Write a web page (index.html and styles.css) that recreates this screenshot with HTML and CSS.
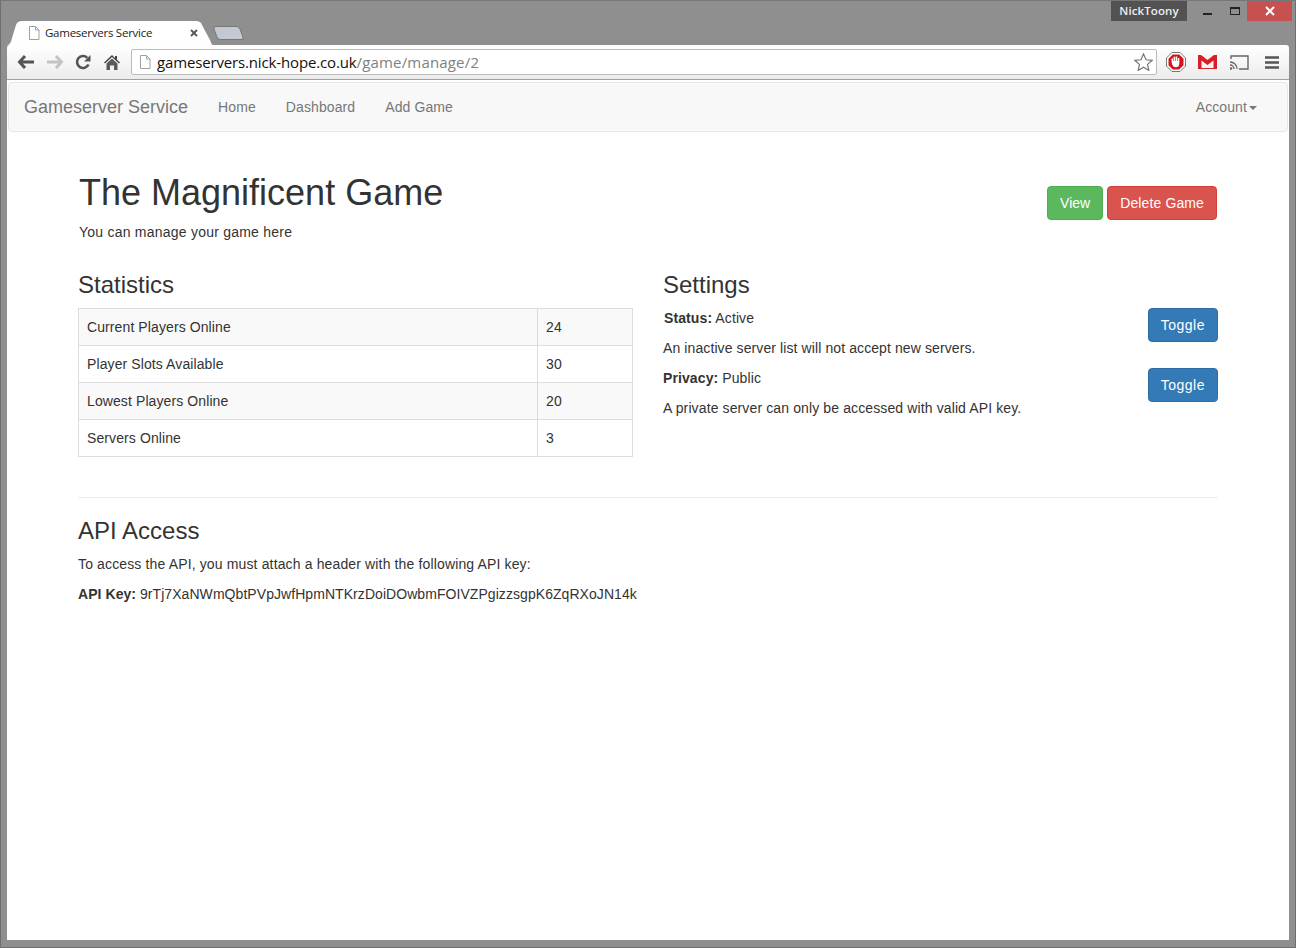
FILE: index.html
```html
<!DOCTYPE html>
<html lang="en">
<head>
    <meta charset="UTF-8">
    <title>Gameservers Service</title>
    <link rel="stylesheet" href="styles.css">
</head>
<body>

<div class="window">
    <div class="titlebar">
        <div class="tab">
            <svg class="doc-icon" width="12" height="14" viewBox="0 0 12 14"><path d="M1.5.5h6l3.500 3.500v9.500h-9.500z M7.500.5v3.500h3.500" fill="#fff" stroke="#a0a0a0"/></svg>
            <span class="tab-title">Gameservers Service</span>
            <svg class="tab-close" width="8" height="8" viewBox="0 0 8 8"><path d="M1 1l6 6M7 1l-6 6" stroke="#555" stroke-width="1.800"/></svg>
        </div>
        <div class="new-tab"></div>
        <div class="user-badge">NickToony</div>
        <div class="win-controls">
            <span class="win-btn"><i class="win-min"></i></span>
            <span class="win-btn win-btn-max"><i class="win-max"></i></span>
            <span class="win-btn win-close">
                <svg width="10" height="10" viewBox="0 0 10 10"><path d="M1 1l8 8M9 1l-8 8" stroke="#fff" stroke-width="2"/></svg>
            </span>
        </div>
    </div>

    <div class="toolbar">
        <svg class="tool" width="18" height="16" viewBox="0 0 18 16"><path d="M8 2L2.500 8 8 14M3 8h14" fill="none" stroke="#555" stroke-width="3"/></svg>
        <svg class="tool" width="18" height="16" viewBox="0 0 18 16"><path d="M10 2l5.500 6L10 14M15 8H1" fill="none" stroke="#c4c4c4" stroke-width="3"/></svg>
        <svg class="tool" width="16" height="16" viewBox="0 0 16 16"><path d="M13.500 10.500A6 6 0 1 1 12.300 3.800" fill="none" stroke="#555" stroke-width="2.600"/><path d="M15.500 1v6.500H9z" fill="#555"/></svg>
        <svg class="tool tool-home" width="16" height="16" viewBox="0 0 16 16"><path d="M8 1L0 8.500l1 1L8 3l7 6.500 1-1-3-2.800V2h-2v1.900z" fill="#444"/><path d="M8 4.500L2.500 9.500V16h3.500v-4.500h4V16h3.500V9.500z" fill="#5a5a5a"/></svg>
        <div class="omnibox">
            <svg width="12" height="14" viewBox="0 0 12 14"><path d="M1.500.5h6l3.500 3.500v9.500h-9.500z M7.500.5v3.500h3.500" fill="#fff" stroke="#a0a0a0"/></svg>
            <span class="url"><span class="url-host">gameservers.nick-hope.co.uk</span>/game/manage/2</span>
            <svg class="star" width="19" height="18" viewBox="0 0 19 18"><path d="M9.500 1l2.500 5.800 6.200.5-4.700 4.100 1.400 6.100-5.400-3.200-5.400 3.200 1.400-6.100L.8 7.300 7 6.800z" fill="#fff" stroke="#777" stroke-width="1.200"/></svg>
        </div>
        <div class="extensions">
            <svg width="20" height="20" viewBox="0 0 20 20"><path d="M6 .5h8L19.500 6v8L14 19.500H6L.5 14V6z" fill="#fff" stroke="#777"/><path d="M6.800 2.500h6.400l4.300 4.300v6.400l-4.300 4.300H6.800l-4.300-4.300V6.800z" fill="#d3141b"/><path d="M5.500 9V6.500h1.500V9h.6V4.800h1.500V9h.6V4.500h1.500V9h.6V6h1.500v6c0 2-1.400 3.300-3.400 3.300-2.200 0-3-1.200-3.900-3.300z" fill="#fff"/></svg>
            <svg width="19" height="14" viewBox="0 0 19 14"><rect width="19" height="14" fill="#d81f26"/><path d="M3 0h13L9.500 5z" fill="#f4f4f4"/><path d="M3.500 5.500L9.500 10l6-4.500V13h-12z" fill="#f4f4f4"/></svg>
            <svg class="ext-cast" width="19" height="15" viewBox="0 0 19 15"><path d="M1 4V1h17v13H9" fill="none" stroke="#666" stroke-width="1.400"/><path d="M0 7a7 7 0 0 1 7 7M0 10a4 4 0 0 1 4 4" fill="none" stroke="#666" stroke-width="1.300"/><circle cx="1" cy="13.500" r="1.300" fill="#666"/></svg>
            <svg class="ext-menu" width="14" height="13" viewBox="0 0 14 13"><path d="M0 1.500h14M0 6.500h14M0 11.500h14" stroke="#555" stroke-width="2.600"/></svg>
        </div>
    </div>

    <div class="page">
        <nav class="navbar">
            <div class="container nav-inner">
                <a class="brand" href="#">Gameserver Service</a>
                <a class="nav-link" href="#">Home</a>
                <a class="nav-link" href="#">Dashboard</a>
                <a class="nav-link" href="#">Add Game</a>
                <a class="nav-link nav-right" href="#">Account<i class="caret"></i></a>
            </div>
        </nav>

        <div class="container">
            <div class="header-row">
                <div>
                    <h1>The Magnificent Game</h1>
                    <p class="lead-line">You can manage your game here</p>
                </div>
                <div class="header-btns">
                    <a class="btn btn-green" href="#">View</a>
                    <a class="btn btn-red" href="#">Delete Game</a>
                </div>
            </div>

            <div class="columns">
                <section>
                    <h3>Statistics</h3>
                    <table class="stats">
                        <tr><td>Current Players Online</td><td class="val">24</td></tr>
                        <tr><td>Player Slots Available</td><td class="val">30</td></tr>
                        <tr><td>Lowest Players Online</td><td class="val">20</td></tr>
                        <tr><td>Servers Online</td><td class="val">3</td></tr>
                    </table>
                </section>
                <section>
                    <h3>Settings</h3>
                    <div class="setting">
                        <div>
                            <p class="status-line"><b>Status:</b> Active</p>
                            <p>An inactive server list will not accept new servers.</p>
                        </div>
                        <a class="btn btn-blue" href="#">Toggle</a>
                    </div>
                    <div class="setting">
                        <div>
                            <p><b>Privacy:</b> Public</p>
                            <p class="private-note">A private server can only be accessed with valid API key.</p>
                        </div>
                        <a class="btn btn-blue" href="#">Toggle</a>
                    </div>
                </section>
            </div>

            <hr>

            <h3>API Access</h3>
            <p class="api-text">To access the API, you must attach a header with the following API key:</p>
            <p class="api-key"><b>API Key:</b> 9rTj7XaNWmQbtPVpJwfHpmNTKrzDoiDOwbmFOIVZPgizzsgpK6ZqRXoJN14k</p>
        </div>
    </div>
</div>

</body>
</html>
```

FILE: styles.css
```css
html, body {
    margin: 0;
    height: 100%;
}
body {
    font-family: "Liberation Sans", Arial, sans-serif;
    font-size: 14px;
    line-height: 20px;
    letter-spacing: 0.1px;
    color: #333;
    background: #8f8f8f;
}
a {
    text-decoration: none;
}

/* browser frame */
.window {
    box-sizing: border-box;
    height: 948px;
    display: flex;
    flex-direction: column;
    padding: 0 6px 7px 6px;
    background: #8f8f8f;
    border: 1px solid #6e6e6e;
    border-top-color: #777;
    margin: 0;
}
.titlebar {
    height: 44px;
    display: flex;
    align-items: flex-end;
    margin: 0 -6px;
    padding-left: 6px;
    position: relative;
}
.tab {
    box-sizing: border-box;
    width: 206px;
    height: 24px;
    display: flex;
    align-items: center;
    padding: 0 15px 1px 21px;
    background: #fff;
    clip-path: path("M0 24 C3 24 4 21 5 17 L9 4 C10 1 12 0 15 0 L189 0 C192 0 194 1 195 4 L203 19 C204 22 205 24 206 24 Z");
    font-family: "Open Sans", sans-serif;
    font-size: 11.500px;
    letter-spacing: -0.250px;
    color: #222;
}
.doc-icon {
    margin-right: 5px;
}
.tab-title {
    flex: 1;
}
.new-tab {
    width: 27px;
    height: 14px;
    margin: 0 0 5px 2px;
    background: #c3c9d1;
    border: 1px solid #777;
    border-radius: 3px;
    box-sizing: border-box;
    transform: skewX(20deg);
}
.user-badge {
    position: absolute;
    top: 0;
    right: 108px;
    width: 76px;
    height: 20px;
    background: #525252;
    color: #eee;
    font-family: "Open Sans", sans-serif;
    font-size: 11.500px;
    font-weight: 600;
    line-height: 20px;
    text-align: center;
}
.win-controls {
    position: absolute;
    top: 0;
    right: 3px;
    display: flex;
}
.win-btn {
    width: 29px;
    height: 20px;
    display: flex;
    align-items: center;
    justify-content: center;
}
.win-btn-max {
    width: 25px;
}
.win-btn.win-close {
    width: 45px;
    background: #c75050;
}
.win-min {
    width: 9px;
    height: 2px;
    margin-top: 6px;
    background: #222;
}
.win-max {
    box-sizing: border-box;
    width: 10px;
    height: 8px;
    border: 1px solid #222;
    border-top-width: 2px;
}

.toolbar {
    height: 35px;
    box-sizing: border-box;
    display: flex;
    align-items: center;
    padding: 0 10px 0 10px;
    background: linear-gradient(#fff, #ececec);
    border-bottom: 1px solid #a0a0a0;
    border-radius: 3px 3px 0 0;
    gap: 11px;
}
.tool-home {
    margin-left: 2px;
    margin-right: -2px;
}
.omnibox {
    box-sizing: border-box;
    width: 1026px;
    height: 26px;
    margin-left: 2px;
    display: flex;
    align-items: center;
    padding: 0 3px 0 7px;
    background: #fff;
    border: 1px solid #bcbcbc;
    border-radius: 2px;
}
.url {
    flex: 1;
    margin-left: 6px;
    font-family: "Open Sans", sans-serif;
    font-size: 15px;
    letter-spacing: 0.180px;
    color: #808080;
}
.url-host {
    color: #111;
    letter-spacing: -0.150px;
}
.extensions {
    display: flex;
    align-items: center;
    gap: 12px;
    margin-left: -2px;
}
.ext-cast {
    margin-left: 1px;
}
.ext-menu {
    margin-left: 4px;
}

/* page */
.page {
    flex: 1;
    background: #fff;
    padding-top: 2px;
}
.navbar {
    box-sizing: border-box;
    height: 50px;
    margin: 0 1px;
    background: #f8f8f8;
    border: 1px solid #e7e7e7;
    border-radius: 4px;
}
.container {
    width: 1140px;
    margin: 0 auto;
}
.nav-inner {
    width: 1248px;
    display: flex;
    align-items: center;
    height: 48px;
}
.brand {
    font-size: 18px;
    letter-spacing: 0;
    color: #777;
    margin-right: 15px;
}
.nav-link {
    color: #777;
    padding: 0 15px;
}
.nav-right {
    margin-left: auto;
}
.caret {
    display: inline-block;
    width: 0;
    height: 0;
    margin-left: 2px;
    vertical-align: middle;
    border-top: 4px solid #777;
    border-left: 4px solid transparent;
    border-right: 4px solid transparent;
}

.header-row {
    display: flex;
    justify-content: space-between;
    align-items: flex-start;
    padding: 0 1px;
}
h1 {
    font-size: 36px;
    font-weight: 400;
    line-height: 40px;
    letter-spacing: 0;
    margin: 41px 0 9px 0;
}
h3 {
    font-size: 24px;
    font-weight: 400;
    line-height: 26px;
    letter-spacing: 0;
    margin: 20px 0 10px 0;
}
p {
    margin: 0 0 10px 0;
}
.lead-line {
    letter-spacing: 0.230px;
}
.status-line {
    padding-left: 1px;
}
.private-note {
    letter-spacing: 0.120px;
}
.api-text {
    letter-spacing: 0.140px;
}
.api-key {
    letter-spacing: 0.060px;
}
.header-btns {
    display: flex;
    gap: 4px;
    margin-top: 54px;
}
.btn {
    box-sizing: border-box;
    height: 34px;
    padding: 6px 12px;
    border: 1px solid transparent;
    border-radius: 4px;
    color: #fff;
}
.btn-green {
    background: #5cb85c;
    border-color: #4cae4c;
    letter-spacing: 0;
}
.btn-red {
    background: #d9534f;
    border-color: #d43f3a;
    letter-spacing: 0.120px;
}
.btn-blue {
    background: #337ab7;
    border-color: #2e6da4;
    letter-spacing: 0.500px;
}

.columns {
    display: grid;
    grid-template-columns: 555px 555px;
    gap: 30px;
}
.stats {
    width: 100%;
    border-collapse: collapse;
}
.stats td {
    padding: 8px;
    border: 1px solid #ddd;
    line-height: 20px;
}
.stats tr:nth-child(odd) {
    background: #f9f9f9;
}
.stats .val {
    width: 78px;
}
.setting {
    display: flex;
    justify-content: space-between;
    align-items: flex-start;
}
.setting p {
    margin-bottom: 10px;
}

hr {
    margin: 40px 0 20px 0;
    border: 0;
    border-top: 1px solid #eee;
}
```
